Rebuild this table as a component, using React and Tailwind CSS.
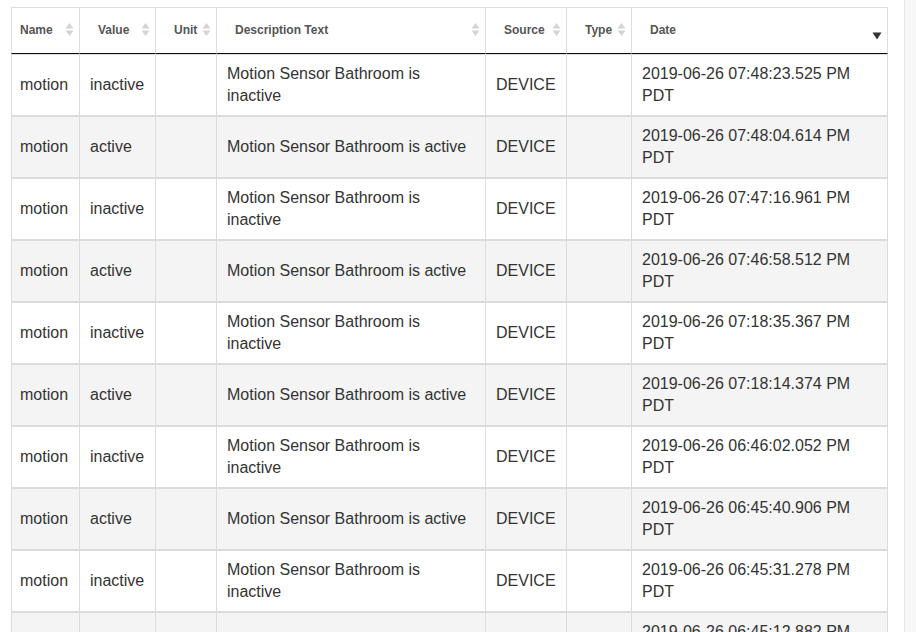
import React from "react";

const columns = [
  { key: "name", label: "Name", width: 69, first: true },
  { key: "value", label: "Value", width: 76 },
  { key: "unit", label: "Unit", width: 61 },
  { key: "desc", label: "Description Text", width: 269 },
  { key: "source", label: "Source", width: 81 },
  { key: "type", label: "Type", width: 65 },
  { key: "date", label: "Date", width: 256, sorted: true },
];

const times = [
  "07:48:23.525",
  "07:48:04.614",
  "07:47:16.961",
  "07:46:58.512",
  "07:18:35.367",
  "07:18:14.374",
  "06:46:02.052",
  "06:45:40.906",
  "06:45:31.278",
  "06:45:12.882",
];

const rows = times.map((t, i) => {
  const state = i % 2 === 0 ? "inactive" : "active";
  return {
    name: "motion",
    value: state,
    unit: "",
    desc: `Motion Sensor Bathroom is ${state}`,
    source: "DEVICE",
    type: "",
    date: `2019-06-26 ${t} PM PDT`,
  };
});

// both arrows, light gray (unsorted column)
const SortBoth = () => (
  <svg width="9" height="15" viewBox="0 0 9 15" className="shrink-0">
    <path d="M4.5 1 L8.5 6.5 L0.5 6.5 Z" fill="#d4d4d4" />
    <path d="M4.5 14 L8.5 8.5 L0.5 8.5 Z" fill="#d4d4d4" />
  </svg>
);

const SortDesc = () => (
  <svg width="10" height="8" viewBox="0 0 10 8" className="shrink-0 mt-[12px]">
    <path d="M0.5 0.5 L9.5 0.5 L5 7.5 Z" fill="#333" />
  </svg>
);

const App = () => {
  return (
    <div className="flex w-[916px] h-[632px] overflow-hidden bg-white font-['Liberation_Sans',Arial,sans-serif]">
      <div className="flex-1 pl-[11px] pt-[7px]">
        <table className="table-fixed border-separate border-spacing-0 w-[877px]">
          <colgroup>
            {columns.map((c) => (
              <col key={c.key} style={{ width: c.width }} />
            ))}
          </colgroup>
          <thead>
            <tr>
              {columns.map((c) => (
                <th
                  key={c.key}
                  className={`h-[47px] p-0 border-t border-r border-b border-t-[#ddd] border-r-[#ddd] border-b-[#111] text-left align-middle ${
                    c.first ? "border-l border-l-[#ddd]" : ""
                  }`}
                >
                  <div
                    className={`flex items-center justify-between pr-[5px] pb-[2px] ${
                      c.first ? "pl-[8px]" : "pl-[18px]"
                    }`}
                  >
                    <span className="text-[12px] font-bold text-[#555] leading-[16px]">
                      {c.label}
                    </span>
                    {c.sorted ? <SortDesc /> : <SortBoth />}
                  </div>
                </th>
              ))}
            </tr>
          </thead>
          <tbody>
            {rows.map((r, i) => (
              <tr key={i} className={i % 2 === 0 ? "bg-white" : "bg-[#f4f4f4]"}>
                {columns.map((c) => (
                  <td
                    key={c.key}
                    className={`h-[62px] py-0 border-t border-b border-r border-[#dcdcdc] align-middle text-[16px] leading-[22px] text-[#333] ${
                      c.first ? "border-l pl-[8px] pr-[8px]" : "pl-[10px] pr-[10px]"
                    }`}
                  >
                    {r[c.key]}
                  </td>
                ))}
              </tr>
            ))}
          </tbody>
        </table>
      </div>
      <div className="w-[12px] h-full border-l border-[#e6e6e6] bg-[#f7f7f7]" />
    </div>
  );
};

export default App;
